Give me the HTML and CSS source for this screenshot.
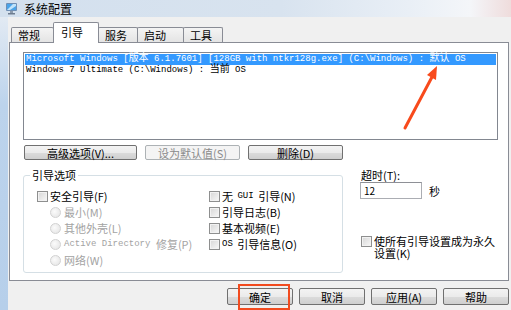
FILE: index.html
```html
<!DOCTYPE html>
<html lang="zh-CN">
<head>
    <meta charset="UTF-8">
    <meta name="viewport" content="width=device-width, initial-scale=1.0">
    <title>系统配置</title>
    <link rel="stylesheet" href="styles.css">
</head>
<body>
    <div class="titlebar">
        <svg class="app-icon" width="13" height="13" viewBox="0 0 13 13">
            <rect x="1" y="1" width="11" height="8" rx="1" fill="#6f8fb5"/>
            <rect x="2" y="2" width="9" height="6" fill="#4aa3e8"/>
            <path d="M2 8 L8 2 L11 2 L11 4 L5 8 Z" fill="#bfe3fb"/>
            <rect x="5" y="9" width="3" height="2" fill="#8c9aab"/>
            <rect x="3" y="11" width="7" height="1.5" fill="#6e7d90"/>
        </svg>
        <span class="title">系统配置</span>
    </div>

    <div class="frame">
        <div class="edge"></div>
        <div class="client">
            <!-- tabs -->
            <div class="tabs">
                <div class="tab tab-general">常规</div>
                <div class="tab tab-boot active">引导</div>
                <div class="tab tab-services">服务</div>
                <div class="tab tab-startup">启动</div>
                <div class="tab tab-tools">工具</div>
            </div>

            <div class="panel">
                <div class="os-list">
                    <div class="os-row selected">Microsoft Windows [<span class="cn">版本</span> 6.1.7601] [128GB with ntkr128g.exe] (C:\Windows) : <span class="cn">默认</span> OS</div>
                    <div class="os-row">Windows 7 Ultimate (C:\Windows) : <span class="cn">当前</span> OS</div>
                </div>

                <div class="button-row">
                    <button class="btn btn-advanced">高级选项(V)...</button>
                    <button class="btn btn-mid" disabled>设为默认值(S)</button>
                    <button class="btn btn-mid">删除(D)</button>
                </div>

                <div class="lower">
                    <fieldset class="group">
                        <legend>引导选项</legend>
                        <div class="options">
                            <div class="col col-left">
                                <div class="item"><span class="check"></span>安全引导(F)</div>
                                <div class="item sub off"><span class="radio"></span>最小(M)</div>
                                <div class="item sub off"><span class="radio"></span>其他外壳(L)</div>
                                <div class="item sub off"><span class="radio"></span><span class="mono">Active Directory</span>&nbsp;修复(P)</div>
                                <div class="item sub off"><span class="radio"></span>网络(W)</div>
                            </div>
                            <div class="col">
                                <div class="item"><span class="check"></span>无&nbsp;<span class="mono">GUI</span>&nbsp;引导(N)</div>
                                <div class="item"><span class="check"></span>引导日志(B)</div>
                                <div class="item"><span class="check"></span>基本视频(E)</div>
                                <div class="item"><span class="check"></span><span class="mono">OS</span>&nbsp;引导信息(O)</div>
                            </div>
                        </div>
                    </fieldset>

                    <div class="side">
                        <div class="timeout-label">超时(T):</div>
                        <div class="timeout">
                            <div class="field">12</div>
                            <span>秒</span>
                        </div>
                        <div class="perm">
                            <span class="check"></span>
                            <span class="perm-text">使所有引导设置成为永久<br>设置(K)</span>
                        </div>
                    </div>
                </div>
            </div>

            <div class="footer">
                <button class="btn btn-foot">确定</button>
                <button class="btn btn-foot">取消</button>
                <button class="btn btn-foot">应用(A)</button>
                <button class="btn btn-foot">帮助</button>
            </div>
        </div>
    </div>

    <!-- annotations drawn over the dialog -->
    <div class="highlight"></div>
    <svg class="arrow" width="511" height="310" viewBox="0 0 511 310">
        <line x1="405" y1="128" x2="432" y2="77" stroke="#f84a1c" stroke-width="3" stroke-linecap="round"/>
        <polygon points="437,66 436,80 427,75" fill="#f84a1c"/>
    </svg>
</body>
</html>
```

FILE: styles.css
```css
body {
    margin: 0;
    width: 511px;
    height: 310px;
    overflow: hidden;
    background: #f0f0f0;
    font-family: "Noto Sans CJK SC", "Liberation Sans", sans-serif;
    font-size: 11px;
    color: #000;
    position: relative;
}

.titlebar {
    height: 17px;
    display: flex;
    align-items: center;
    gap: 6px;
    padding-left: 5px;
    background: linear-gradient(to right, #d3e0ee 0%, #d8e3ef 55%, #e9eff6 80%, #f4f6f9 92%, #efdcdc 100%);
}
.app-icon {
    display: block;
}
.title {
    font-size: 12px;
    line-height: 17px;
}

.frame {
    display: flex;
    height: 293px;
}
.edge {
    width: 8px;
    background: linear-gradient(#e2eaf3, #bcd3ec 30%, #b6cfea);
}
.client {
    flex: 1;
    padding-top: 5px;
}

/* tabs */
.tabs {
    display: flex;
    align-items: flex-end;
    height: 20px;
    padding-left: 3px;
}
.tab {
    box-sizing: border-box;
    height: 15px;
    line-height: 14px;
    padding-left: 6px;
    border: 1px solid #898c95;
    border-bottom: none;
    margin-right: -1px;
    background: linear-gradient(#f4f4f4, #e4e4e4);
    border-radius: 2px 2px 0 0;
}
.tab-general { width: 43px; }
.tab-boot { width: 46px; }
.tab-services { width: 40px; }
.tab-startup { width: 47px; }
.tab-tools { width: 40px; }
.tab.active {
    height: 21px;
    line-height: 19px;
    padding-left: 7px;
    margin-bottom: -1px;
    background: #fff;
    position: relative;
    z-index: 1;
}

.panel {
    box-sizing: border-box;
    margin-left: 1px;
    width: 500px;
    height: 239px;
    border: 1px solid #898c95;
    background: #fff;
    padding: 9px 0 0 13px;
}

.os-list {
    box-sizing: border-box;
    width: 475px;
    height: 88px;
    border: 1px solid #828790;
    padding: 1px 1px 0 1px;
}
.os-row {
    height: 11px;
    padding-left: 1px;
    white-space: nowrap;
    font-family: "Liberation Mono", "Noto Sans CJK SC", monospace;
    font-size: 9px;
    line-height: 11px;
}
.os-row .cn {
    font-family: "Noto Sans CJK SC", sans-serif;
    font-size: 10px;
    line-height: 0;
}
.os-row.selected {
    background: #3399ff;
    color: #fff;
}

/* buttons */
.btn {
    box-sizing: border-box;
    height: 15px;
    padding: 0;
    border: 1px solid #707070;
    border-radius: 2px;
    background: linear-gradient(#f3f3f3 0%, #ebebeb 50%, #dcdcdc 50%, #cfcfcf 100%);
    font-family: "Noto Sans CJK SC", sans-serif;
    font-size: 11px;
    line-height: 12px;
    color: #000;
}
.btn:disabled {
    border-color: #adb2b5;
    background: #f4f4f4;
    color: #8a8a8a;
}
.button-row {
    display: flex;
    gap: 8px;
    margin-top: 5px;
    padding-left: 1px;
}
.btn-advanced { width: 113px; }
.btn-mid { width: 95px; }

/* lower part */
.lower {
    display: flex;
    margin-top: 8px;
}
.group {
    box-sizing: border-box;
    width: 320px;
    height: 105px;
    margin: 0;
    padding: 0;
    border: 1px solid #d5dfe5;
    border-radius: 3px;
}
.group legend {
    margin-left: 6px;
    padding: 0 2px;
    line-height: 14px;
}
.options {
    display: flex;
    padding: 6px 0 0 13px;
}
.col {
    display: flex;
    flex-direction: column;
}
.col-left {
    width: 172px;
}
.item {
    height: 16px;
    display: flex;
    align-items: center;
    gap: 2px;
    white-space: nowrap;
    line-height: 14px;
}
.item.sub {
    padding-left: 13px;
    gap: 3px;
}
.item.off {
    color: #a3a3a3;
}
.mono {
    font-family: "Liberation Mono", monospace;
    font-size: 9px;
}

.check {
    box-sizing: border-box;
    flex: none;
    width: 11px;
    height: 11px;
    border: 1px solid #8e8f8f;
    background: linear-gradient(135deg, #d6d6d6, #f8f8f8);
    box-shadow: inset 0 0 0 1px #f2f2f2;
}
.radio {
    box-sizing: border-box;
    flex: none;
    width: 11px;
    height: 11px;
    border-radius: 50%;
    border: 1px solid #d2d2d2;
    background: radial-gradient(circle at 40% 40%, #fbfbfb, #e2e2e2);
}

.side {
    margin-left: 18px;
}
.timeout-label {
    line-height: 14px;
}
.timeout {
    display: flex;
    align-items: center;
    gap: 7px;
    margin-left: -1px;
}
.field {
    box-sizing: border-box;
    width: 62px;
    height: 17px;
    border: 1px solid #abadb3;
    border-top-color: #8e9096;
    padding-left: 3px;
    line-height: 15px;
    font-size: 10px;
}
.perm {
    display: flex;
    align-items: flex-start;
    gap: 2px;
    margin-top: 36px;
}
.perm .check {
    margin-top: 1px;
}
.perm-text {
    line-height: 12px;
}

.footer {
    display: flex;
    justify-content: flex-end;
    gap: 6px;
    width: 500px;
    margin: 7px 0 0 1px;
}
.btn-foot {
    width: 66px;
    height: 17px;
    line-height: 14px;
}

/* annotations */
.highlight {
    position: absolute;
    left: 238px;
    top: 284px;
    width: 52px;
    height: 26px;
    box-sizing: border-box;
    border: 2px solid #f24b1f;
}
.arrow {
    position: absolute;
    left: 0;
    top: 0;
    pointer-events: none;
}
```
